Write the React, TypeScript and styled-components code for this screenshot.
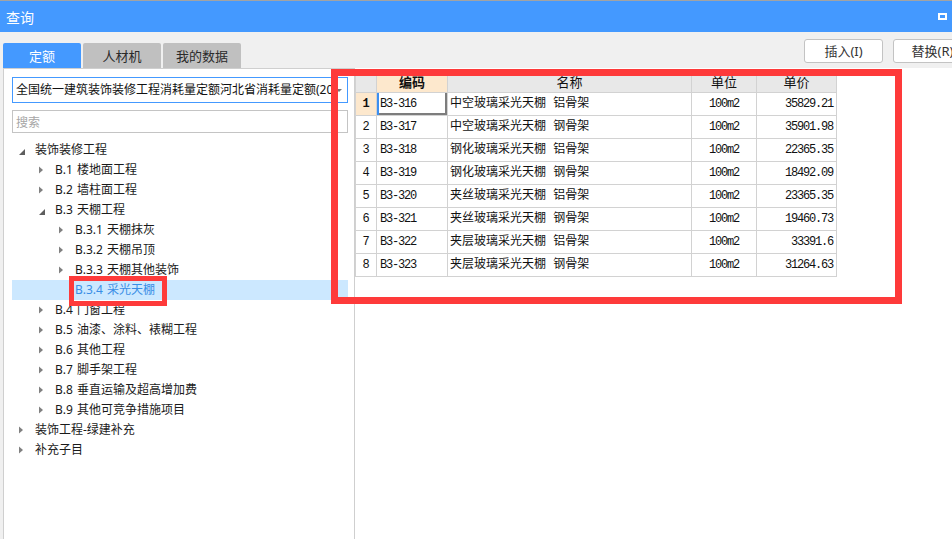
import React from "react";
import styled, { createGlobalStyle } from "styled-components";

const GlobalStyle = createGlobalStyle`
  html, body {
    margin: 0;
    padding: 0;
  }
  body {
    font-family: "Noto Sans", "Noto Sans CJK SC", sans-serif;
    background: #ffffff;
  }
`;

const Window = styled.div`
  position: relative;
  width: 952px;
  height: 539px;
  display: flex;
  flex-direction: column;
  overflow: hidden;
  background: #f0f0f0;
  border-top: 1px solid #a3a3a3;
  box-sizing: border-box;
`;

const TitleBar = styled.div`
  height: 31px;
  flex-shrink: 0;
  background: #4499ff;
  display: flex;
  align-items: center;
  justify-content: space-between;
  padding: 0 5px 0 6px;
`;

const Title = styled.span`
  font: 14px/20px "Noto Sans CJK SC", sans-serif;
  color: #ffffff;
`;

const MaxIcon = styled.span`
  width: 9px;
  height: 7px;
  box-sizing: border-box;
  border: 2px solid #ffffff;
`;

const TopBar = styled.div`
  height: 36px;
  flex-shrink: 0;
  display: flex;
  justify-content: space-between;
  padding-left: 3px;
`;

const Tabs = styled.div`
  display: flex;
  gap: 2px;
  align-self: flex-end;
`;

const Tab = styled.div<{ $active?: boolean }>`
  width: 78px;
  height: 25px;
  border-radius: 2px 2px 0 0;
  background: ${(p) => (p.$active ? "#4499ff" : "#c0c0c0")};
  color: ${(p) => (p.$active ? "#ffffff" : "#2b2b2b")};
  font: 13px/25px "Noto Sans CJK SC", sans-serif;
  text-align: center;
`;

const Buttons = styled.div`
  display: flex;
  gap: 10px;
  margin-top: 7px;
  margin-right: -20px;
`;

const Button = styled.div`
  width: 79px;
  height: 24px;
  box-sizing: border-box;
  border: 1px solid #c3c3c3;
  border-radius: 3px;
  background: #ffffff;
  color: #333333;
  font: 13px/22px "Noto Sans", "Noto Sans CJK SC", sans-serif;
  text-align: center;
`;

const Panels = styled.div`
  flex: 1;
  display: flex;
  padding-left: 3px;
  min-height: 0;
`;

const LeftPanel = styled.div`
  width: 352px;
  flex-shrink: 0;
  box-sizing: border-box;
  background: #ffffff;
  border: 1px solid #cfcfcf;
  border-bottom: none;
  padding: 8px 6px 0 8px;
  display: flex;
  flex-direction: column;
`;

const Select = styled.div`
  height: 26px;
  box-sizing: border-box;
  border: 1px solid #4499ff;
  display: flex;
  align-items: center;
  padding: 0 5px 0 3px;
  gap: 4px;
`;

const SelectText = styled.span`
  flex: 1;
  overflow: hidden;
  white-space: nowrap;
  font: 12px/24px "Noto Sans", "Noto Sans CJK SC", sans-serif;
  color: #111111;
`;

const Caret = styled.span`
  width: 0;
  height: 0;
  border-left: 3px solid transparent;
  border-right: 3px solid transparent;
  border-top: 3px solid #777777;
`;

const Search = styled.div`
  margin-top: 7px;
  height: 23px;
  box-sizing: border-box;
  border: 1px solid #c4c4c4;
  padding-left: 3px;
  font: 12px/21px "Noto Sans CJK SC", sans-serif;
  color: #a6a6a6;
`;

const Tree = styled.div`
  margin-top: 7px;
  display: flex;
  flex-direction: column;
`;

const TreeRow = styled.div<{ $level: number; $selected?: boolean }>`
  height: 20px;
  display: flex;
  align-items: center;
  padding-left: ${(p) => 7 + p.$level * 20}px;
  background: ${(p) => (p.$selected ? "#cce8ff" : "transparent")};
`;

const Toggle = styled.span`
  width: 16px;
  height: 20px;
  flex-shrink: 0;
  display: flex;
  align-items: center;
`;

const TreeLabel = styled.span<{ $selected?: boolean }>`
  font: 12px/20px "Noto Sans", "Noto Sans CJK SC", sans-serif;
  color: ${(p) => (p.$selected ? "#3a8ee6" : "#1a1a1a")};
  white-space: nowrap;
  word-spacing: 1px;
`;

const RightPanel = styled.div`
  flex: 1;
  background: #ffffff;
  padding-top: 2px;
`;

const Grid = styled.table`
  border-collapse: collapse;
  table-layout: fixed;
`;

const HeadCell = styled.th<{ $active?: boolean; $w: number }>`
  width: ${(p) => p.$w}px;
  height: 21px;
  padding: 0;
  border: 1px solid #d2d2d2;
  background: ${(p) => (p.$active ? "#fde8cd" : "#e8e8e8")};
  font: ${(p) => (p.$active ? 700 : 400)} 13px/20px "Noto Sans CJK SC", sans-serif;
  color: #111111;
  text-align: center;
`;

const NumCell = styled.td<{ $active?: boolean }>`
  height: 22px;
  padding: 0;
  border: 1px solid #d2d2d2;
  background: ${(p) => (p.$active ? "#fde8cd" : "#ffffff")};
  font: ${(p) => (p.$active ? 700 : 400)} 12px/22px "Liberation Mono", monospace;
  color: #111111;
  text-align: center;
`;

const Cell = styled.td<{ $align?: string; $focused?: boolean }>`
  padding: 0 3px;
  border: 1px solid #d2d2d2;
  font: 12px/22px "Liberation Mono", monospace;
  letter-spacing: -1.2px;
  color: #111111;
  text-align: ${(p) => p.$align || "left"};
  white-space: nowrap;
  overflow: hidden;
  box-shadow: ${(p) =>
    p.$focused ? "inset 2px 0 0 #3d8ff0, inset -2px -2px 0 #7d7d7d" : "none"};
`;

const NameCell = styled.td`
  padding: 0 2px;
  border: 1px solid #d2d2d2;
  font: 12px/22px "Liberation Mono", "Noto Sans CJK SC", sans-serif;
  color: #111111;
  white-space: nowrap;
  overflow: hidden;
`;

const Mark = styled.div<{ $x: number; $y: number; $w: number; $h: number; $t: number }>`
  position: absolute;
  left: ${(p) => p.$x}px;
  top: ${(p) => p.$y}px;
  width: ${(p) => p.$w}px;
  height: ${(p) => p.$h}px;
  box-sizing: border-box;
  border: ${(p) => p.$t}px solid #fe3a3a;
  pointer-events: none;
`;

type Node = {
  level: number;
  label: string;
  state: "open" | "closed" | "leaf";
  selected?: boolean;
};

const tree: Node[] = [
  { level: 0, label: "装饰装修工程", state: "open" },
  { level: 1, label: "B.1 楼地面工程", state: "closed" },
  { level: 1, label: "B.2 墙柱面工程", state: "closed" },
  { level: 1, label: "B.3 天棚工程", state: "open" },
  { level: 2, label: "B.3.1 天棚抹灰", state: "closed" },
  { level: 2, label: "B.3.2 天棚吊顶", state: "closed" },
  { level: 2, label: "B.3.3 天棚其他装饰", state: "closed" },
  { level: 2, label: "B.3.4 采光天棚", state: "leaf", selected: true },
  { level: 1, label: "B.4 门窗工程", state: "closed" },
  { level: 1, label: "B.5 油漆、涂料、裱糊工程", state: "closed" },
  { level: 1, label: "B.6 其他工程", state: "closed" },
  { level: 1, label: "B.7 脚手架工程", state: "closed" },
  { level: 1, label: "B.8 垂直运输及超高增加费", state: "closed" },
  { level: 1, label: "B.9 其他可竞争措施项目", state: "closed" },
  { level: 0, label: "装饰工程-绿建补充", state: "closed" },
  { level: 0, label: "补充子目", state: "closed" },
];

const rows = [
  ["B3-316", "中空玻璃采光天棚 铝骨架", "100m2", "35829.21"],
  ["B3-317", "中空玻璃采光天棚 钢骨架", "100m2", "35901.98"],
  ["B3-318", "钢化玻璃采光天棚 铝骨架", "100m2", "22365.35"],
  ["B3-319", "钢化玻璃采光天棚 钢骨架", "100m2", "18492.09"],
  ["B3-320", "夹丝玻璃采光天棚 铝骨架", "100m2", "23365.35"],
  ["B3-321", "夹丝玻璃采光天棚 钢骨架", "100m2", "19460.73"],
  ["B3-322", "夹层玻璃采光天棚 铝骨架", "100m2", "33391.6"],
  ["B3-323", "夹层玻璃采光天棚 钢骨架", "100m2", "31264.63"],
];

function ToggleIcon({ state }: { state: Node["state"] }) {
  if (state === "open") {
    return (
      <svg width="6" height="20" viewBox="0 0 6 20">
        <polygon points="6,9 6,15 0,15" fill="#5e5e5e" />
      </svg>
    );
  }
  if (state === "closed") {
    return (
      <svg width="5" height="20" viewBox="0 0 5 20">
        <polygon points="0,6.5 4,10 0,13.5" fill="#808080" />
      </svg>
    );
  }
  return null;
}

export default function App() {
  return (
    <>
      <GlobalStyle />
      <Window>
        <TitleBar>
          <Title>查询</Title>
          <MaxIcon />
        </TitleBar>
        <TopBar>
          <Tabs>
            <Tab $active>定额</Tab>
            <Tab>人材机</Tab>
            <Tab>我的数据</Tab>
          </Tabs>
          <Buttons>
            <Button>插入(I)</Button>
            <Button>替换(R)</Button>
          </Buttons>
        </TopBar>
        <Panels>
          <LeftPanel>
            <Select>
              <SelectText>
                全国统一建筑装饰装修工程消耗量定额河北省消耗量定额(2012)
              </SelectText>
              <Caret />
            </Select>
            <Search>搜索</Search>
            <Tree>
              {tree.map((node, i) => (
                <TreeRow key={i} $level={node.level} $selected={node.selected}>
                  <Toggle>
                    <ToggleIcon state={node.state} />
                  </Toggle>
                  <TreeLabel $selected={node.selected}>{node.label}</TreeLabel>
                </TreeRow>
              ))}
            </Tree>
          </LeftPanel>
          <RightPanel>
            <Grid>
              <thead>
                <tr>
                  <HeadCell $w={20}></HeadCell>
                  <HeadCell $w={70} $active>
                    编码
                  </HeadCell>
                  <HeadCell $w={243}>名称</HeadCell>
                  <HeadCell $w={64}>单位</HeadCell>
                  <HeadCell $w={79}>单价</HeadCell>
                </tr>
              </thead>
              <tbody>
                {rows.map((r, i) => (
                  <tr key={r[0]}>
                    <NumCell $active={i === 0}>{i + 1}</NumCell>
                    <Cell $focused={i === 0}>{r[0]}</Cell>
                    <NameCell>{r[1]}</NameCell>
                    <Cell $align="center">{r[2]}</Cell>
                    <Cell $align="right">{r[3]}</Cell>
                  </tr>
                ))}
              </tbody>
            </Grid>
          </RightPanel>
        </Panels>
        <Mark $x={331} $y={68} $w={571} $h={235} $t={7} />
        <Mark $x={69} $y={275} $w={98} $h={30} $t={5} />
      </Window>
    </>
  );
}
